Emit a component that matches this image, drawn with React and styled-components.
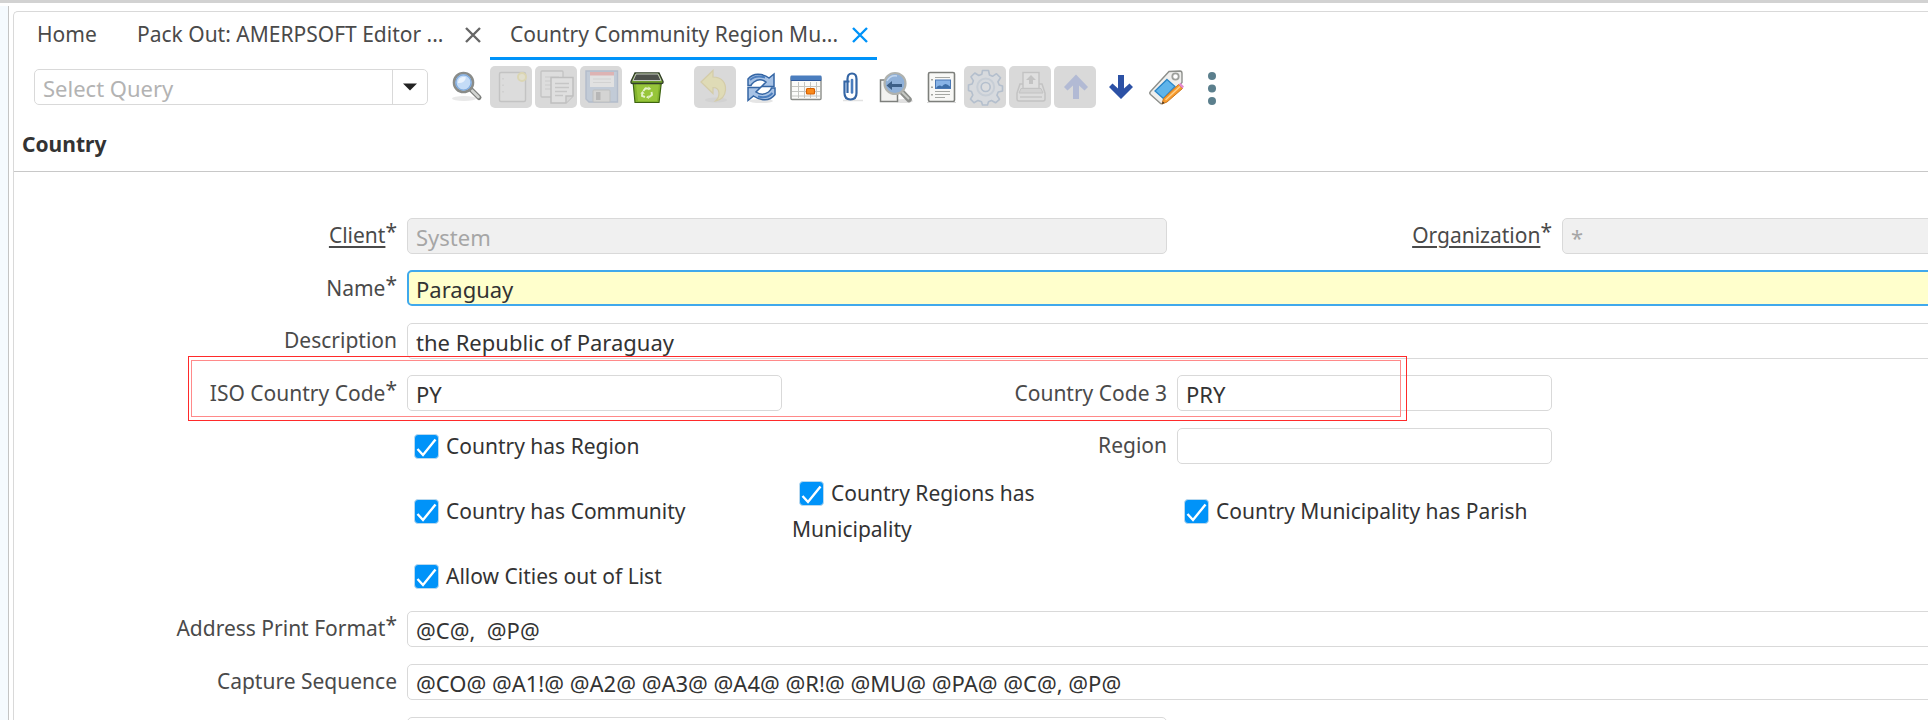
import React from 'react';
import styled, { createGlobalStyle, css } from 'styled-components';

const GlobalStyle = createGlobalStyle`
  *, *::before, *::after { box-sizing: border-box; }
  body {
    margin: 0;
    background: #fff;
    color: #333;
    font: 21px/36px 'Noto Sans', 'Open Sans', sans-serif;
  }
  button, input, select { font: inherit; color: inherit; margin: 0; }
`;

const Shell = styled.div`
  height: 100vh;
  display: flex;
  flex-direction: column;
  border-top: 3px solid #d2d2d2;
  overflow: hidden;
`;

const Body = styled.div`
  flex: 1;
  min-height: 0;
  display: flex;
  gap: 4px;
  padding-top: 3px;
`;

const SideStrip = styled.div`
  flex: none;
  width: 9px;
  background: #f5fafe;
  border-right: 1px solid #c4c4c4;
`;

const Panel = styled.main`
  flex: 1;
  min-width: 0;
  display: flex;
  flex-direction: column;
  margin-top: 5px;
  border: solid #d9d9d9;
  border-width: 1px 0 0 1px;
  border-top-left-radius: 5px;
  overflow: hidden;
`;

const TabBar = styled.nav`
  flex: none;
  display: flex;
  padding-left: 3px;
`;

const Tab = styled.div`
  flex: none;
  width: ${(p) => p.$width}px;
  height: 48px;
  display: flex;
  align-items: center;
  justify-content: space-between;
  padding: 0 9px 1px 20px;
  border-bottom: 3px solid ${(p) => (p.$active ? '#0093f9' : 'transparent')};
  color: #4a4a4a;
`;

const PlainButton = styled.button`
  padding: 0;
  border: 0;
  background: none;
  white-space: nowrap;
  cursor: pointer;
`;

const CloseButton = styled(PlainButton)`
  display: flex;
  padding-top: 2px;
  color: ${(p) => (p.$active ? '#0093f9' : '#666')};
`;

const Toolbar = styled.div`
  flex: none;
  display: flex;
  align-items: center;
  gap: 3px;
  padding: 6px 0 0 20px;
`;

const Combo = styled.label`
  width: 394px;
  height: 36px;
  display: flex;
  align-items: center;
  margin-right: 14px;
  border: 1px solid #d9d9d9;
  border-radius: 5px;
  overflow: hidden;
`;

const QuerySelect = styled.select`
  flex: 1;
  height: 34px;
  padding: 0 8px;
  border: 0;
  background: none;
  appearance: none;
  font-size: 22px;
  color: #b3b3b3;
  outline: none;
`;

const ComboArrow = styled.span`
  width: 35px;
  height: 34px;
  display: grid;
  place-items: center;
  border-left: 1px solid #d9d9d9;
`;

const ToolButton = styled.button`
  flex: none;
  width: 42px;
  height: 42px;
  display: grid;
  padding: 0;
  border: 0;
  border-radius: 5px;
  background: ${(p) => (p.disabled ? '#d9d9d9' : 'none')};
  margin-left: ${(p) => (p.$spaced ? 24 : 0)}px;
  svg { display: block; opacity: ${(p) => (p.disabled ? 0.22 : 1)}; }
`;

const Title = styled.h1`
  flex: none;
  margin: 0;
  padding: 18px 8px 9px;
  border-bottom: 1px solid #c8c8c8;
  font-size: 21px;
  line-height: 36px;
  font-weight: 700;
  color: #333;
`;

const Form = styled.form`
  flex: 1;
  min-height: 0;
  margin-right: -14px;
  padding: 37px 0 0 3px;
  overflow: auto;
  scrollbar-width: none;
`;

const Row = styled.div`
  position: relative;
  display: grid;
  grid-template-columns: repeat(5, minmax(0, 1fr));
  align-items: center;
  min-height: 53px;
  &:nth-child(2), &:nth-child(4) { min-height: 52px; }
  &:nth-child(6) { min-height: 77px; }
`;

const Cell = styled.div`
  grid-column: ${(p) => p.$col} / span ${(p) => p.$span || 1};
  padding: 0 5px;
`;

const Caption = styled.label`
  grid-column: ${(p) => p.$col};
  padding: 0 5px 1px;
  text-align: right;
  white-space: nowrap;
  color: #4a4a4a;
`;

const CaptionText = styled.span`
  ${(p) => p.$link && css`
    text-decoration: underline;
    text-underline-offset: 3px;
  `}
`;

const Star = styled.sup`
  font-size: 21px;
  line-height: 0;
  vertical-align: 4px;
`;

const TextInput = styled.input`
  display: block;
  width: 100%;
  height: 36px;
  padding: 2px 8px 0;
  border: 1px solid #d9d9d9;
  border-radius: 5px;
  background: #fff;
  font-size: 22px;
  color: #333;
  outline: none;
  &:disabled { background: #f0f0f0; color: #a6a6a6; }
  ${(p) => p.$current && css`
    border: 2px solid #40a9ec;
    padding: 2px 7px 0;
    background: #ffffcc;
  `}
`;

const CheckLabel = styled.label`
  display: block;
  padding-right: 16px;
  line-height: 36px;
  color: #333;
`;

const CheckBox = styled.input`
  appearance: none;
  width: 25px;
  height: 25px;
  margin: 0 7px 0 7px;
  vertical-align: -5px;
  border: 1px solid #b9d9ef;
  border-radius: 4px;
  background: #fff;
  &:checked {
    background: #0093f9 linear-gradient(#0093f9, #0093f9);
    background-image: url("data:image/svg+xml,%3Csvg xmlns='http://www.w3.org/2000/svg' viewBox='0 0 23 23'%3E%3Cpath d='M2.500 14 L8 20 L20.500 4.500' fill='none' stroke='white' stroke-width='2.400'/%3E%3C/svg%3E");
  }
`;

/* Red frame that calls out the two country code fields. */
const Callout = styled.div`
  position: absolute;
  top: -11px;
  bottom: -2px;
  left: 171px;
  width: calc(63% + 6px);
  padding: 3px 5px 3px 2px;
  border: 1px solid #ff2a2a;
  pointer-events: none;
  &::before {
    content: '';
    display: block;
    height: 100%;
    border: 1px solid #ff8a8a;
  }
`;

const Svg = ({ children, size = 42 }) => (
  <svg width={size} height={size} viewBox={`0 0 ${size} ${size}`} fill="none" aria-hidden="true">
    {children}
  </svg>
);

const CloseIcon = () => (
  <Svg size={16}>
    <path d="M1 1L15 15M15 1L1 15" stroke="currentColor" strokeWidth="2.4" />
  </Svg>
);

const icons = {
  search: (
    <>
      <ellipse cx="19" cy="32.500" rx="12" ry="2.500" fill="#e9e9e9" />
      <path d="M26 23.500L34 31.500" stroke="#7d7f7c" strokeWidth="5" strokeLinecap="round" />
      <path d="M27 24.500L33.500 31" stroke="#d3d5d2" strokeWidth="2.500" strokeLinecap="round" />
      <circle cx="18.500" cy="16.500" r="9.500" fill="#b8d4f4" stroke="#8a8c89" strokeWidth="2.600" />
      <circle cx="18.500" cy="16.500" r="7.600" fill="#c4dcf7" stroke="#7fabdf" strokeWidth="1.400" />
      <path d="M13 17c0-5 4-7 8-5.500c-1 4-4 6-8 5.500z" fill="#eaf3fd" />
    </>
  ),
  create: (
    <>
      <rect x="9.500" y="6.500" width="26" height="29" rx="1.500" fill="#e9e9e7" stroke="#777" strokeWidth="1.400" />
      <path d="M13 12v18" stroke="#888" strokeDasharray="1.500 5" />
      <circle cx="32" cy="11" r="4" fill="#fff6a8" stroke="#e5cc30" strokeWidth="2" />
    </>
  ),
  copy: (
    <>
      <rect x="6" y="5" width="22" height="26" rx="1" fill="#ededed" stroke="#777" strokeWidth="1.300" />
      <path d="M10 11h14M10 15h14M10 19h10M10 23h10" stroke="#999" />
      <path d="M16 11.500h22V30l-7 7H16z" fill="#f6f6f6" stroke="#666" strokeWidth="1.500" />
      <path d="M31 37v-7h7" fill="#ccc" stroke="#666" strokeWidth="1.400" />
      <path d="M20 17.500h14M20 21.500h14M20 25.500h12M20 29.500h8" stroke="#888" strokeWidth="1.300" />
    </>
  ),
  save: (
    <>
      <path d="M6 5h31.500v31H9L6 33z" fill="#739bd2" stroke="#31599b" strokeWidth="1.400" />
      <rect x="10" y="6" width="24" height="15" fill="#fff" />
      <rect x="10" y="6" width="24" height="3.500" fill="#ef3131" />
      <path d="M13 13h18M13 16.500h18" stroke="#bbb" />
      <rect x="13" y="24" width="17" height="12" rx="1" fill="#c4c6c2" stroke="#666" />
      <rect x="16" y="26" width="4.500" height="8" fill="#444" />
    </>
  ),
  trash: (
    <>
      <path d="M8 15h28.500l-2.500 21.500H10z" fill="#82b32c" stroke="#3d6410" strokeWidth="1.200" />
      <path d="M11 18h23L32 35H13z" fill="#97c53a" />
      <path d="M10 7h24l4 8.500q.300 2-1.500 2H7.500q-1.800 0-1.500-2z" fill="#6f9e2b" stroke="#33402a" strokeWidth="1.300" />
      <path d="M11 8h22l3 6.500H8z" fill="#4d514b" stroke="#c5c9c0" strokeWidth="1" />
      <g stroke="#e3f1c8" strokeWidth="1.900">
        <path d="M18.300 25L20.500 22.300L23.500 22.600" />
        <path d="M26.500 26L27 28.800L24 31.300" />
        <path d="M20 31L17 29.800L17.300 27" />
      </g>
      <path d="M23.500 20.500l2.800 2.400-3.200 1.300z M23.500 29.300l-2.500 2 3 1.600z M15.300 27.500l2.300-2.600 2.200 2.800z" fill="#e3f1c8" />
    </>
  ),
  undo: (
    <>
      <ellipse cx="22" cy="34" rx="11" ry="2.500" fill="#bbb" />
      <path d="M7 16L19 4.500V11C28 11 32 17 31.500 24C31 30 27 34 21.500 35C26 31 27 21.500 19 21.500V27.500z" fill="#f5e23c" stroke="#c4a000" strokeWidth="1.200" />
    </>
  ),
  refresh: (
    <>
      <ellipse cx="22" cy="35" rx="12" ry="2" fill="#e5e5e5" />
      <path d="M9 19.500V13Q14 7 22 8.500Q27 9.500 30 12L35 8V20.500H22.500L27 16Q21 11.500 15 16Q12.500 18 12 19.500z" fill="#a7c2e5" stroke="#3465a4" strokeWidth="1.500" />
      <path d="M36 22V28.500Q31 35 23 33.500Q18 32.500 14.500 30L9 34.500V21.500H21.500L17 26Q23 30.500 29.500 26Q32 24 32.500 22z" fill="#a7c2e5" stroke="#3465a4" strokeWidth="1.500" />
      <path d="M11 14Q17 8.500 26 11.500M33.500 27Q28 33 19 30.500" stroke="#4a7dbe" strokeWidth="2" />
    </>
  ),
  calendar: (
    <>
      <rect x="7" y="11" width="30" height="22.500" rx="1" fill="#fbfbf9" stroke="#8b8d89" strokeWidth="1.400" />
      <rect x="6.500" y="9.500" width="31" height="5.500" rx="1" fill="#4a7dbe" />
      <path d="M7 14.500h30" stroke="#31599b" />
      <path d="M8 20.500h28M8 25.500h28M8 30h28M14.500 16v16M20.500 16v16M26.500 16v16M32.500 16v16" stroke="#c5c6c2" />
      <rect x="22.500" y="22.500" width="8" height="5.500" rx="1" fill="#f98a1b" stroke="#d65f00" strokeWidth="1.200" />
    </>
  ),
  attach: (
    <>
      <path d="M14 34.500h20" stroke="#e2e2e2" strokeWidth="1.600" />
      <path d="M18.500 27V13Q18.500 7.500 23 7.500Q27.500 7.500 27.500 13V27Q27.500 33.500 21.500 33.500Q15.500 33.500 15.500 27V15.500H20.500" stroke="#3465a4" strokeWidth="2.200" />
      <path d="M23 14V26.500" stroke="#4a7dbe" strokeWidth="2.600" strokeLinecap="round" />
      <path d="M16.500 17V28" stroke="#86a8d4" />
    </>
  ),
  zoomAcross: (
    <>
      <ellipse cx="30" cy="35" rx="9" ry="2" fill="#e0e0e0" />
      <rect x="6.500" y="14" width="17" height="21.500" fill="#f2f2f0" stroke="#7d7f7c" strokeWidth="1.500" />
      <path d="M27 25L35 33.500" stroke="#8d8f8c" strokeWidth="5.500" strokeLinecap="round" />
      <path d="M28 26L34.500 32.500" stroke="#c8cac6" strokeWidth="1.800" strokeLinecap="round" />
      <circle cx="21" cy="17.500" r="10.500" fill="#8fb0d8" stroke="#b0b2ae" strokeWidth="2.200" />
      <path d="M12.500 19.500l5.500-4.500v3h10v3H18v3z" fill="#3d5f87" />
      <path d="M13 15q3-6 10-5" stroke="#c4d7ee" strokeWidth="1.500" />
    </>
  ),
  report: (
    <>
      <rect x="9.500" y="6.500" width="26" height="29" rx="1.500" fill="#f8f8f6" stroke="#7d7f7b" strokeWidth="1.600" />
      <path d="M8 36.500h29" stroke="#d8d8d8" />
      <path d="M13 13v18" stroke="#888a85" strokeWidth="1.500" strokeDasharray="1.500 6" />
      <path d="M16 11.500h15M16 25.500h15M16 28.500h15M16 31.500h10" stroke="#a5a7a3" strokeWidth="1.200" />
      <rect x="16.500" y="14" width="15" height="8.500" fill="#88b3e6" stroke="#4a78b5" />
      <path d="M17 22q3-4 6-1.500q3-5 8 0V22z" fill="#3d6ea8" />
    </>
  ),
  process: (
    <>
      <path
        d="M18.500 4.500h6l1 4.500 3 1.300 4-2.600 4 4-2.600 4 1.300 3.300 3.300 1v5l-4.300 1-1.300 3.300 2.600 4-4 3.500-4-2.300-3 1.200-1 3.300h-5l-1-3.300-3.500-1.300-4 2.400-3.500-3.700 2.300-4L7.500 25.500l-3-1v-5.500l3.600-1 1.300-3.200-2.400-4 3.800-3.800 4 2.500 3-1.200z"
        fill="#d3e0f0" stroke="#3465a4" strokeWidth="1.600" strokeLinejoin="round"
      />
      <circle cx="21.700" cy="21" r="8.500" stroke="#8aa8d0" strokeWidth="2" />
      <circle cx="21.700" cy="21" r="4.500" fill="#e8eef7" stroke="#3465a4" strokeWidth="1.600" />
    </>
  ),
  print: (
    <>
      <path d="M11 18L8 27v6q0 2 2 2h24q2 0 2-2v-6l-3-9z" fill="#e9e9e7" stroke="#777" strokeWidth="1.500" />
      <rect x="14" y="6.500" width="16" height="16" fill="#f6f6f6" stroke="#777" strokeWidth="1.400" />
      <path d="M22 9l5 5h-3v4h-4v-4h-3z" fill="#777" />
      <path d="M12 22.500h20l2 4.500H10z" fill="#bbb" stroke="#777" />
      <path d="M11 31h22" stroke="#888" strokeWidth="1.600" />
    </>
  ),
  up: <path d="M22 8.500L34 21L30.500 24.500L25 19.500V33H19V19.500L13.500 24.500L10 21z" fill="#2c51c5" />,
  down: <path d="M22 33L34 21L30.500 17.500L25 22.500V9H19V22.500L13.500 17.500L10 21z" fill="#2c51a5" />,
  tag: (
    <>
      <path d="M25 5.500L36 5Q38 5 38 7.500V16.500L19 37Q17.500 38.500 16 37L6.500 28.500Q5 27 6.500 25.500z" fill="#efefed" stroke="#8d8f8b" strokeWidth="1.400" />
      <path d="M23 13.500L31 20.500L19.500 32.500L11 25z" fill="#5fb4ea" stroke="#2a86c8" strokeWidth="1.300" />
      <circle cx="31.500" cy="10.500" r="3.200" fill="#fff" stroke="#9d9f9b" strokeWidth="1.800" />
      <path d="M34.500 18.500L38.500 22.500L23 36L18 38L19.500 32.500z" fill="#f79a2c" stroke="#c9781f" strokeWidth="1" />
      <path d="M36 20.500L21.500 34" stroke="#ffd08a" strokeWidth="1.500" />
      <path d="M34.500 18.500l2-1.500 3.500 3.500-1.500 2z" fill="#e58ad0" />
      <path d="M18 38l.700-2.500 1.800 1.600z" fill="#333" />
    </>
  ),
  more: (
    <g fill="#5b7f8d">
      <circle cx="23" cy="10" r="4" />
      <circle cx="23" cy="22.500" r="4" />
      <circle cx="23" cy="35" r="4" />
    </g>
  ),
};

const tools = [
  { icon: 'search', label: 'Find' },
  { icon: 'create', label: 'New record', disabled: true },
  { icon: 'copy', label: 'Copy record', disabled: true },
  { icon: 'save', label: 'Save', disabled: true },
  { icon: 'trash', label: 'Delete' },
  { icon: 'undo', label: 'Undo', disabled: true, spaced: true },
  { icon: 'refresh', label: 'Refresh' },
  { icon: 'calendar', label: 'Grid toggle' },
  { icon: 'attach', label: 'Attachment' },
  { icon: 'zoomAcross', label: 'Zoom across' },
  { icon: 'report', label: 'Report' },
  { icon: 'process', label: 'Process', disabled: true },
  { icon: 'print', label: 'Print', disabled: true },
  { icon: 'up', label: 'Parent record', disabled: true },
  { icon: 'down', label: 'Detail record' },
  { icon: 'tag', label: 'Labels' },
  { icon: 'more', label: 'More' },
];

const tabs = [
  { title: 'Home', width: 100 },
  { title: 'Pack Out: AMERPSOFT Editor ...', width: 373, closable: true },
  { title: 'Country Community Region Mu...', width: 387, closable: true, active: true },
];

function Field({ id, label, col = 1, span = 1, value = '', required, link, disabled, current }) {
  return (
    <>
      <Caption htmlFor={id} $col={col}>
        <CaptionText $link={link}>{label}</CaptionText>
        {required && <Star>*</Star>}
      </Caption>
      <Cell $col={col + 1} $span={span}>
        <TextInput id={id} type="text" defaultValue={value} disabled={disabled} $current={current} />
      </Cell>
    </>
  );
}

function Check({ label, col }) {
  return (
    <Cell $col={col}>
      <CheckLabel>
        <CheckBox type="checkbox" defaultChecked />
        {label}
      </CheckLabel>
    </Cell>
  );
}

export default function App() {
  return (
    <Shell>
      <GlobalStyle />
      <Body>
        <SideStrip />
        <Panel>
          <TabBar>
            {tabs.map((t) => (
              <Tab key={t.title} $width={t.width} $active={t.active}>
                <PlainButton type="button">{t.title}</PlainButton>
                {t.closable && (
                  <CloseButton type="button" aria-label="Close tab" $active={t.active}>
                    <CloseIcon />
                  </CloseButton>
                )}
              </Tab>
            ))}
          </TabBar>
          <Toolbar>
            <Combo>
              <QuerySelect aria-label="Select Query">
                <option>Select Query</option>
              </QuerySelect>
              <ComboArrow>
                <Svg size={16}>
                  <path d="M1 4.500h14L8 11.500z" fill="#222" />
                </Svg>
              </ComboArrow>
            </Combo>
            {tools.map((t) => (
              <ToolButton key={t.icon} type="button" aria-label={t.label} disabled={t.disabled} $spaced={t.spaced}>
                <Svg>{icons[t.icon]}</Svg>
              </ToolButton>
            ))}
          </Toolbar>
          <Title>Country</Title>
          <Form>
            <Row>
              <Field id="client" label="Client" span={2} value="System" required link disabled />
              <Field id="org" label="Organization" col={4} value="*" required link disabled />
            </Row>
            <Row>
              <Field id="name" label="Name" span={4} value="Paraguay" required current />
            </Row>
            <Row>
              <Field id="description" label="Description" span={4} value="the Republic of Paraguay" />
            </Row>
            <Row>
              <Field id="iso" label="ISO Country Code" value="PY" required />
              <Field id="code3" label="Country Code 3" col={3} value="PRY" />
              <Callout />
            </Row>
            <Row>
              <Check label="Country has Region" col={2} />
              <Field id="region" label="Region" col={3} />
            </Row>
            <Row>
              <Check label="Country has Community" col={2} />
              <Check label="Country Regions has Municipality" col={3} />
              <Check label="Country Municipality has Parish" col={4} />
            </Row>
            <Row>
              <Check label="Allow Cities out of List" col={2} />
            </Row>
            <Row>
              <Field id="print-format" label="Address Print Format" span={4} value="@C@,  @P@" required />
            </Row>
            <Row>
              <Field id="capture" label="Capture Sequence" span={4} value="@CO@ @A1!@ @A2@ @A3@ @A4@ @R!@ @MU@ @PA@ @C@, @P@" />
            </Row>
            <Row>
              <Cell $col={2} $span={2}>
                <TextInput type="text" aria-label="Display Sequence" />
              </Cell>
            </Row>
          </Form>
        </Panel>
      </Body>
    </Shell>
  );
}
